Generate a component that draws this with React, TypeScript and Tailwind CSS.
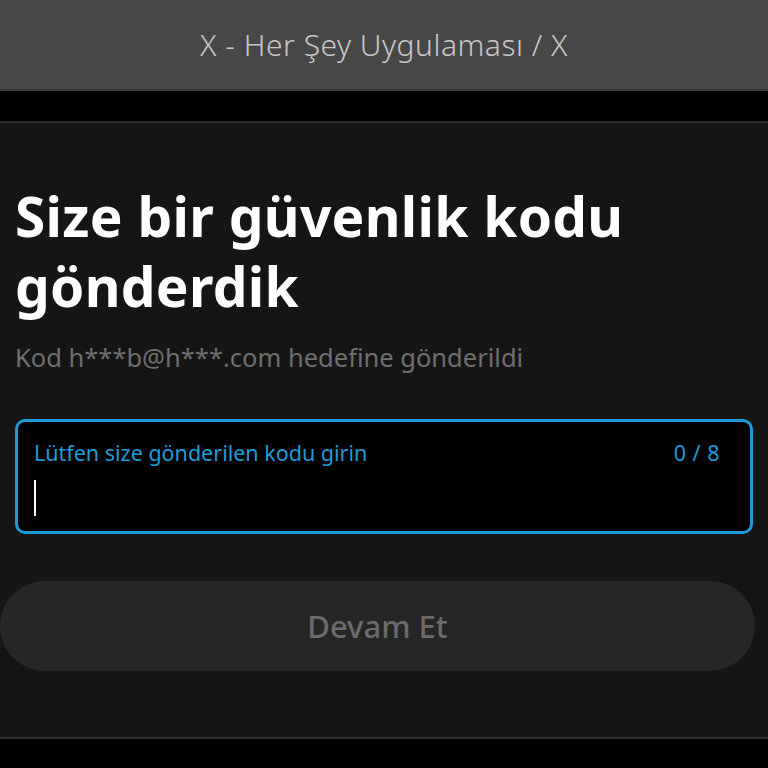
export default function App() {
  const font = { fontFamily: '"Noto Sans", "Open Sans", sans-serif' };
  return (
    <div className="w-[768px] h-[768px] bg-black flex flex-col overflow-hidden" style={font}>
      <div className="h-[91px] shrink-0 bg-[#474747] border-b-2 border-[#3b3b3b] flex items-center justify-center">
        <span className="text-[30px] text-[#c8c8c8] tracking-[0.5px] font-light">X - Her Şey Uygulaması / X</span>
      </div>
      <div className="h-[30px] shrink-0 bg-black" />
      <div className="h-[618px] shrink-0 bg-[#151515] border-t-2 border-b-2 border-[#2f2f2f] flex flex-col">
        <div className="px-[15px] pt-[58px]">
          <h1 className="text-[55px] leading-[70px] font-bold text-white tracking-[0.3px]">Size bir güvenlik kodu gönderdik</h1>
          <p className="mt-[18px] text-[25.5px] leading-[36px] text-[#6f6f6f]">Kod h***b@h***.com hedefine gönderildi</p>
        </div>
        <div className="mx-[15px] mt-[44px] h-[115px] rounded-[10px] border-[3px] border-[#1d9bd9] bg-black flex flex-col px-[16px] pt-[16px]">
          <div className="flex justify-between items-center text-[#1d9bd9] text-[21.5px] leading-[30px]">
            <span>Lütfen size gönderilen kodu girin</span>
            <span className="pr-[14px] tracking-[0.5px]">0 / 8</span>
          </div>
          <div className="mt-[12px] w-[2px] h-[36px] bg-white" />
        </div>
        <div className="mt-[47px] mr-[13px] h-[90px] rounded-full bg-[#262626] flex items-center justify-center">
          <span className="text-[31px] text-[#6b6b6b] font-medium">Devam Et</span>
        </div>
      </div>
    </div>
  );
}
